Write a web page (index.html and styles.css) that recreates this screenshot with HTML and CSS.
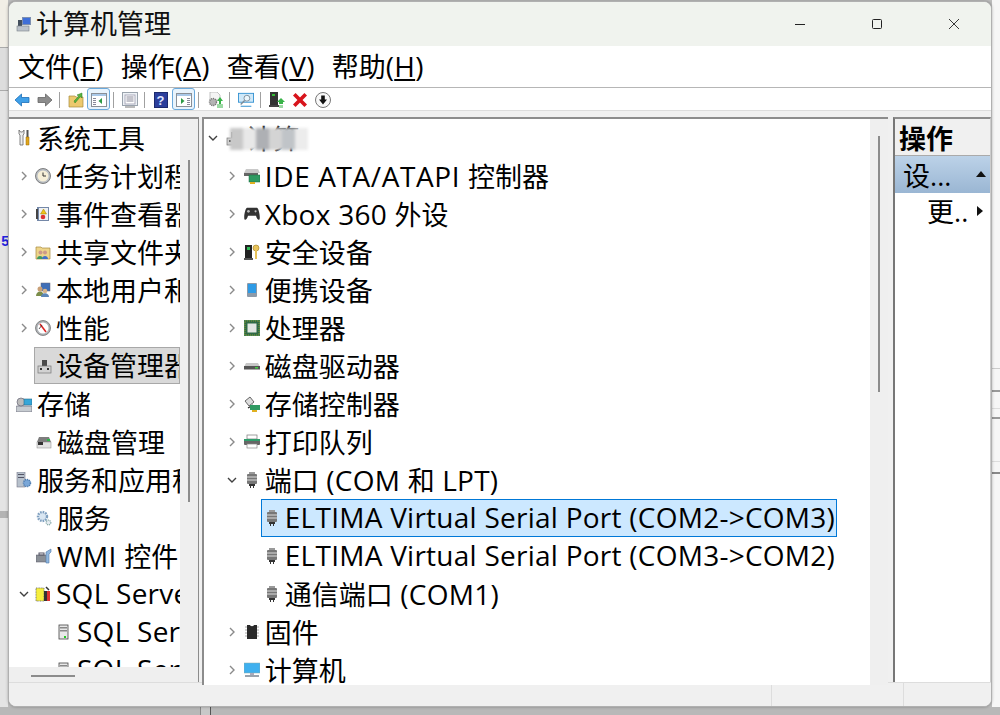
FILE: index.html
```html
<!DOCTYPE html>
<html lang="zh-CN">
<head>
<meta charset="utf-8">
<title>计算机管理</title>
<link rel="stylesheet" href="styles.css">
</head>
<body>
<svg class="sprites" width="0" height="0" aria-hidden="true">
  <defs>
    <symbol id="i-chev-r" viewBox="0 0 8 12"><path d="M2 2l4 4-4 4" fill="none" stroke="#8a8a8a" stroke-width="1.4"/></symbol>
    <symbol id="i-chev-d" viewBox="0 0 12 8"><path d="M2 2l4 4 4-4" fill="none" stroke="#404040" stroke-width="1.4"/></symbol>
    <symbol id="i-comp" viewBox="0 0 16 16"><rect x="6" y="1" width="9" height="8" fill="#7d8fb0"/><rect x="7" y="2" width="7" height="6" fill="#3f6fd8"/><rect x="2" y="4" width="4" height="6" fill="#44505e"/><rect x="1" y="10" width="12" height="5" fill="#bcc3cb" stroke="#7a8088" stroke-width=".6"/></symbol>
    <symbol id="i-device" viewBox="0 0 16 16"><rect x="6" y="2" width="5" height="7" fill="#4a4a4a"/><rect x="2" y="8" width="13" height="7" fill="#d2d2d2" stroke="#777" stroke-width=".7"/><rect x="4" y="10" width="2" height="2" fill="#333"/><rect x="11" y="10" width="2" height="2" fill="#333"/></symbol>
    <symbol id="i-tools" viewBox="0 0 16 16"><path d="M3 0v4l1 1v10h3V5l1-1V0L6.500 2h-2z" fill="#eee" stroke="#666" stroke-width=".8"/><path d="M10.500 0h2v7h-2z" fill="#555"/><path d="M10 7h3v8h-3z" fill="#e0a51c" stroke="#9a6b00" stroke-width=".5"/></symbol>
    <symbol id="i-clock" viewBox="0 0 16 16"><circle cx="8" cy="8" r="7.500" fill="#b9bec4" stroke="#666" stroke-width=".8"/><circle cx="8" cy="8" r="5.500" fill="#f6efd8"/><path d="M8 4.500V8h3" fill="none" stroke="#333" stroke-width="1"/></symbol>
    <symbol id="i-event" viewBox="0 0 16 16"><rect x="2" y="1" width="12" height="14" fill="#7488a8"/><rect x="4" y="2" width="9" height="12" fill="#eef1f5"/><path d="M8.500 3l3 5h-6z" fill="#f0c419" stroke="#9a7a00" stroke-width=".5"/><circle cx="8" cy="11" r="2.300" fill="#d33"/><rect x="1" y="3" width="2" height="10" fill="#444"/></symbol>
    <symbol id="i-share" viewBox="0 0 16 16"><path d="M1 3h5l1 1h8v11H1z" fill="#eed58a" stroke="#a88b3c" stroke-width=".7"/><circle cx="5.500" cy="8.500" r="2" fill="#c98" /><circle cx="10" cy="8.500" r="2" fill="#c98"/><path d="M2 15c0-4 6-4 6 0z" fill="#3f9a5f"/><path d="M7 15c0-4 6-4 6 0z" fill="#3f6fc8"/></symbol>
    <symbol id="i-users" viewBox="0 0 16 16"><rect x="6" y="1" width="9" height="8" fill="#3f6fb8" stroke="#667" stroke-width=".5"/><circle cx="5" cy="7" r="2.500" fill="#c9a077"/><path d="M1 14c0-6 8-6 8 0z" fill="#7b8d4a"/><circle cx="10" cy="9" r="2.300" fill="#d8b48a"/><path d="M6 15c0-5 8-5 8 0z" fill="#5c86b8"/></symbol>
    <symbol id="i-perf" viewBox="0 0 16 16"><circle cx="8" cy="8" r="7.500" fill="#aeb2b6" stroke="#666" stroke-width=".7"/><circle cx="8" cy="8" r="5.500" fill="#fff"/><path d="M5 4l6 8" stroke="#d22" stroke-width="1.500"/><path d="M4 9l3-4" stroke="#333" stroke-width=".8"/></symbol>
    <symbol id="i-storage" viewBox="0 0 16 16"><rect x="0" y="10" width="16" height="6" rx="1" fill="#c6cbd0" stroke="#667" stroke-width=".7"/><circle cx="5" cy="6" r="4" fill="#bbb" stroke="#667" stroke-width=".7"/><rect x="8" y="3" width="8" height="6" fill="#35a6d8" stroke="#2a6d8c" stroke-width=".6"/></symbol>
    <symbol id="i-disk" viewBox="0 0 16 16"><path d="M3 3h10l2 5H1z" fill="#7d7d7d"/><rect x="1" y="8" width="14" height="6" fill="#e2e2e2" stroke="#888" stroke-width=".5"/><rect x="2" y="8" width="5" height="3" fill="#333"/><rect x="11" y="5" width="3" height="2" fill="#2db84a"/></symbol>
    <symbol id="i-svc" viewBox="0 0 16 16"><rect x="1" y="0" width="8" height="15" fill="#b7c1cc" stroke="#778" stroke-width=".6"/><rect x="2" y="2" width="6" height="1" fill="#556"/><rect x="2" y="5" width="6" height="1" fill="#556"/><circle cx="11" cy="11" r="3.500" fill="#7aa7d8" stroke="#4d7cb0" stroke-width="1.500" stroke-dasharray="1.200 .8"/></symbol>
    <symbol id="i-gear" viewBox="0 0 16 16"><circle cx="6.500" cy="6.500" r="4.500" fill="#d9e6f2" stroke="#7f9fbf" stroke-width="2.400" stroke-dasharray="1.600 1"/><circle cx="12.500" cy="12.500" r="2.300" fill="#e6ecf2" stroke="#8aa" stroke-width="1.300" stroke-dasharray="1.100 .7"/></symbol>
    <symbol id="i-wmi" viewBox="0 0 16 16"><rect x="0" y="7" width="11" height="7" fill="#8a8f96" stroke="#556" stroke-width=".5"/><rect x="3" y="5" width="5" height="2" fill="none" stroke="#556"/><path d="M10 4l5-3v3l-2 2v9h-3z" fill="#8fb7e0" stroke="#5078a8" stroke-width=".6"/></symbol>
    <symbol id="i-sql" viewBox="0 0 16 16"><rect x="1" y="2" width="8" height="13" fill="#f6ef3e" stroke="#666" stroke-width=".8" stroke-dasharray="1 .6"/><rect x="9" y="5" width="3" height="10" fill="#333"/><rect x="12" y="5" width="3" height="10" fill="#d33"/><path d="M11 1l3 3" stroke="#333" stroke-width="1.500"/></symbol>
    <symbol id="i-server" viewBox="0 0 16 16"><rect x="3" y="1" width="9" height="14" fill="#e8e8e8" stroke="#444" stroke-width=".8"/><rect x="4" y="3" width="7" height="1.500" fill="#888"/><rect x="4" y="6" width="7" height="1.500" fill="#888"/><rect x="8" y="12" width="2" height="2" fill="#2c2"/></symbol>
    <symbol id="i-ide" viewBox="0 0 16 16"><path d="M2 1h12l2 4H0z" fill="#c9c9c9"/><rect x="0" y="5" width="14" height="3" fill="#666"/><rect x="5" y="7" width="11" height="7" fill="#2f9a62" stroke="#1b6b3e" stroke-width=".5"/><rect x="6" y="14" width="5" height="2" fill="#e0b020"/></symbol>
    <symbol id="i-pad" viewBox="0 0 18 14"><path d="M3.500 0h11c2 0 4 10 3 13-1 1.500-3 0-4-4H4.500c-1 4-3 5.500-4 4-1-3 1-13 3-13z" fill="#333"/><circle cx="13" cy="4" r="1.200" fill="#bbb"/><circle cx="5" cy="4" r="1.500" fill="#bbb"/></symbol>
    <symbol id="i-sec" viewBox="0 0 16 16"><rect x="1" y="1" width="7" height="13" fill="#222"/><rect x="3" y="3" width="3" height="3" fill="#2dbb55"/><rect x="0" y="14" width="9" height="2" fill="#555"/><circle cx="12" cy="4" r="3" fill="#e8c35a" stroke="#a07c1c" stroke-width=".6"/><rect x="11" y="6" width="2" height="9" fill="#e8c35a"/></symbol>
    <symbol id="i-phone" viewBox="0 0 16 16"><rect x="3" y="1" width="10" height="14" rx="1" fill="#8d9aa8"/><rect x="4" y="2" width="8" height="9" fill="#2e9be6"/></symbol>
    <symbol id="i-cpu" viewBox="0 0 16 16"><rect x="0" y="0" width="16" height="16" fill="#3f7f4f"/><rect x="1" y="1" width="14" height="14" fill="#2f6b46" stroke="#e0b020" stroke-width=".5" stroke-dasharray="1 1"/><rect x="3.500" y="3.500" width="9" height="9" fill="#e2e6e2"/></symbol>
    <symbol id="i-hdd" viewBox="0 0 16 16"><path d="M2 5h12l2 4H0z" fill="#c8c8c8"/><rect x="0" y="8" width="16" height="3.500" fill="#555"/><rect x="11" y="9" width="3" height="1.500" fill="#4c4"/></symbol>
    <symbol id="i-ctrl" viewBox="0 0 16 16"><path d="M1 5l5-4 4 5-5 4z" fill="#ddd" stroke="#444" stroke-width=".8"/><path d="M4 12l5-3" stroke="#222" stroke-width="1.200"/><rect x="6" y="9" width="10" height="5" fill="#2f9a62"/><rect x="8" y="14" width="5" height="2" fill="#e0b020"/></symbol>
    <symbol id="i-print" viewBox="0 0 16 16"><rect x="3" y="1" width="10" height="4" fill="#fff" stroke="#777" stroke-width=".7"/><rect x="0" y="5" width="16" height="6" rx="1" fill="#666"/><rect x="0" y="5" width="16" height="2" fill="#2e9d6a"/><rect x="3" y="10" width="10" height="4" fill="#fff" stroke="#888" stroke-width=".7"/></symbol>
    <symbol id="i-port" viewBox="0 0 12 16"><rect x="3" y="0" width="6" height="2" fill="#9a9a9a"/><rect x="1" y="2" width="10" height="10" rx="1" fill="#777"/><path d="M1 5h10M1 8h10" stroke="#ddd" stroke-width="1"/><rect x="3" y="12" width="6" height="2" fill="#333"/><rect x="4" y="14" width="1" height="2" fill="#333"/><rect x="7" y="14" width="1" height="2" fill="#333"/></symbol>
    <symbol id="i-chip" viewBox="0 0 16 16"><path d="M3 1h3c0 1.500 4 1.500 4 0h3v14H3z" fill="#2a2a2a"/><path d="M1 3h2M1 6h2M1 9h2M1 12h2M13 3h2M13 6h2M13 9h2M13 12h2" stroke="#aaa"/></symbol>
    <symbol id="i-mon" viewBox="0 0 16 16"><rect x="0" y="1" width="16" height="10" fill="#3fb0ef" stroke="#8aa" stroke-width=".5"/><rect x="6" y="11" width="4" height="2" fill="#aab"/><rect x="1" y="13" width="14" height="2" fill="#9aa3ad"/></symbol>
    <symbol id="t-back" viewBox="0 0 16 14"><path d="M7.500 1L1 7l6.500 6V9.500H15v-5H7.500z" fill="#3f9fe8" stroke="#1c6fb8" stroke-width=".8"/></symbol>
    <symbol id="t-fwd" viewBox="0 0 16 14"><path d="M8.500 1L15 7l-6.500 6V9.500H1v-5h7.500z" fill="#8c8c8c" stroke="#666" stroke-width=".8"/></symbol>
    <symbol id="t-up" viewBox="0 0 16 16"><path d="M1 4h6l1 1h7v10H1z" fill="#ecc96e" stroke="#a88b3c" stroke-width=".7"/><path d="M6 9l5-5-2-1 5-2v5l-1.500-1.500L7 11z" fill="#57b540" stroke="#2e7d1e" stroke-width=".5"/></symbol>
    <symbol id="t-tree" viewBox="0 0 16 14"><rect x=".5" y=".5" width="15" height="13" fill="#fff" stroke="#8a8f96"/><rect x="1" y="1" width="14" height="2" fill="#a9c8e8"/><path d="M2 5h3v1H2zM2 7h3v1H2zM2 9h3v1H2zM2 11h3v1H2z" fill="#889"/><path d="M11 5v6L7.500 8z" fill="#2c9a45"/></symbol>
    <symbol id="t-pane" viewBox="0 0 16 14"><rect x=".5" y=".5" width="15" height="13" fill="#fff" stroke="#8a8f96"/><rect x="1" y="1" width="14" height="2" fill="#a9c8e8"/><path d="M11 5h3v1h-3zM11 7h3v1h-3zM11 9h3v1h-3zM11 11h3v1h-3z" fill="#889"/><path d="M5 5v6L8.500 8z" fill="#2c9a45"/></symbol>
    <symbol id="t-prop" viewBox="0 0 16 16"><rect x=".5" y=".5" width="15" height="13" fill="#eef2f6" stroke="#9aa3ad"/><rect x="3" y="3" width="10" height="9" fill="#fff" stroke="#aab"/><path d="M4.500 5h7M4.500 7h7M4.500 9h7" stroke="#889"/><rect x="3" y="14" width="10" height="2" fill="#bbb"/></symbol>
    <symbol id="t-export" viewBox="0 0 16 16"><path d="M3 0h7l3 3v5H3z" fill="#f4f4f4" stroke="#aaa" stroke-width=".7"/><circle cx="6" cy="10" r="3.500" fill="#b4b4b4" stroke="#777" stroke-width="1.400" stroke-dasharray="1.200 .8"/><path d="M13 5l3 4h-2v3h-2V9h-2z" fill="#38b348"/><path d="M10 13h6M10 15h6" stroke="#38b348"/></symbol>
    <symbol id="t-scan" viewBox="0 0 18 16"><rect x=".5" y=".5" width="17" height="10" fill="#cfe8f8" stroke="#2f8fd0"/><circle cx="10" cy="6" r="3.300" fill="#eaf5fb" stroke="#7a8a96"/><path d="M7.500 8.500L3 13" stroke="#7a8a96" stroke-width="1.500"/><path d="M3 15h12" stroke="#2f8fd0" stroke-width="1.300"/></symbol>
    <symbol id="t-update" viewBox="0 0 16 16"><rect x="1" y="0" width="8" height="13" fill="#333"/><rect x="3" y="2" width="3" height="2" fill="#3b3"/><rect x="0" y="13" width="10" height="2" fill="#444"/><path d="M12 6l4 4h-2v2h-4v-2H8z" fill="#38b348"/><path d="M10 14h4M10 16h4" stroke="#38b348"/></symbol>
    <symbol id="t-x" viewBox="0 0 14 14"><path d="M2 2l10 10M12 2L2 12" stroke="#d8141c" stroke-width="3.200"/></symbol>
    <symbol id="t-down" viewBox="0 0 16 16"><circle cx="8" cy="8" r="7.500" fill="#f8f8f8" stroke="#777"/><path d="M6.200 3.500h3.600v4h2.200L8 12.500 4 7.500h2.200z" fill="#111"/></symbol>
  </defs>
</svg>

<div class="desk-left">
  <div class="dl-a"></div><div class="dl-b"></div><div class="dl-num">5</div><div class="dl-c"></div>
</div>
<div class="desk-right">
  <div class="dr-a"></div><div class="dr-b"></div><div class="dr-c"></div>
</div>
<div class="desk-bottom"><span class="db-a"></span></div>

<main class="window">
  <header class="titlebar">
    <svg class="title-icon"><use href="#i-comp"/></svg>
    <span class="title-text">计算机管理</span>
    <div class="caption">
      <svg class="cap-btn" viewBox="0 0 12 12"><path d="M1 6.500h10" stroke="#222" stroke-width="1"/></svg>
      <svg class="cap-btn" viewBox="0 0 12 12"><rect x="1.500" y="1.500" width="9" height="9" rx="1" fill="none" stroke="#222"/></svg>
      <svg class="cap-btn" viewBox="0 0 12 12"><path d="M1 1l10 10M11 1L1 11" stroke="#222" stroke-width=".9"/></svg>
    </div>
  </header>
  <nav class="menubar">
    <span class="m">文件<span class="lat">(<u>F</u>)</span></span><span class="m">操作<span class="lat">(<u>A</u>)</span></span><span class="m">查看<span class="lat">(<u>V</u>)</span></span><span class="m">帮助<span class="lat">(<u>H</u>)</span></span>
  </nav>
  <div class="toolbar">
    <span class="tb"><svg class="ti"><use href="#t-back"/></svg></span>
    <span class="tb"><svg class="ti"><use href="#t-fwd"/></svg></span>
    <i class="sep"></i>
    <span class="tb"><svg class="ti"><use href="#t-up"/></svg></span>
    <span class="tb on"><svg class="ti"><use href="#t-tree"/></svg></span>
    <i class="sep"></i>
    <span class="tb"><svg class="ti"><use href="#t-prop"/></svg></span>
    <i class="sep"></i>
    <span class="tb"><span class="helpbtn">?</span></span>
    <span class="tb on"><svg class="ti"><use href="#t-pane"/></svg></span>
    <i class="sep"></i>
    <span class="tb"><svg class="ti"><use href="#t-export"/></svg></span>
    <i class="sep"></i>
    <span class="tb"><svg class="ti"><use href="#t-scan"/></svg></span>
    <i class="sep"></i>
    <span class="tb"><svg class="ti"><use href="#t-update"/></svg></span>
    <span class="tb"><svg class="ti"><use href="#t-x"/></svg></span>
    <span class="tb"><svg class="ti"><use href="#t-down"/></svg></span>
  </div>
  <div class="content">
    <section class="pane pane-left">
      <div class="vscroll"><div class="tree">
        <div class="row lv0"><svg class="ic"><use href="#i-tools"/></svg><span class="t">系统工具</span></div>
        <div class="row lv1"><svg class="ch"><use href="#i-chev-r"/></svg><svg class="ic"><use href="#i-clock"/></svg><span class="t">任务计划程序</span></div>
        <div class="row lv1"><svg class="ch"><use href="#i-chev-r"/></svg><svg class="ic"><use href="#i-event"/></svg><span class="t">事件查看器</span></div>
        <div class="row lv1"><svg class="ch"><use href="#i-chev-r"/></svg><svg class="ic"><use href="#i-share"/></svg><span class="t">共享文件夹</span></div>
        <div class="row lv1"><svg class="ch"><use href="#i-chev-r"/></svg><svg class="ic"><use href="#i-users"/></svg><span class="t">本地用户和组</span></div>
        <div class="row lv1"><svg class="ch"><use href="#i-chev-r"/></svg><svg class="ic"><use href="#i-perf"/></svg><span class="t">性能</span></div>
        <div class="row cur"><span class="curbox"><svg class="ic"><use href="#i-device"/></svg><span class="t">设备管理器</span></span></div>
        <div class="row lv0"><svg class="ic"><use href="#i-storage"/></svg><span class="t">存储</span></div>
        <div class="row noch"><svg class="ic"><use href="#i-disk"/></svg><span class="t">磁盘管理</span></div>
        <div class="row lv0"><svg class="ic"><use href="#i-svc"/></svg><span class="t">服务和应用程序</span></div>
        <div class="row noch"><svg class="ic"><use href="#i-gear"/></svg><span class="t">服务</span></div>
        <div class="row noch"><svg class="ic"><use href="#i-wmi"/></svg><span class="t"><span class="lat">WMI </span>控件</span></div>
        <div class="row lv1"><svg class="ch chd"><use href="#i-chev-d"/></svg><svg class="ic"><use href="#i-sql"/></svg><span class="t"><span class="lat">SQL Server</span></span></div>
        <div class="row lv2"><svg class="ic"><use href="#i-server"/></svg><span class="t"><span class="lat">SQL Server</span></span></div>
        <div class="row lv2"><svg class="ic"><use href="#i-server"/></svg><span class="t"><span class="lat">SQL Server</span></span></div>
      </div><div class="sb-v"><b class="thumb-left"></b></div></div>
      <div class="sb-h"><b></b></div>
    </section>
    <section class="pane pane-mid">
      <div class="tree">
        <div class="row root"><svg class="ch chd"><use href="#i-chev-d"/></svg><svg class="ic"><use href="#i-device"/></svg><span class="t host">计算</span></div>
        <div class="row m1"><svg class="ch"><use href="#i-chev-r"/></svg><svg class="ic"><use href="#i-ide"/></svg><span class="t"><span class="lat wide">IDE ATA/ATAPI </span>控制器</span></div>
        <div class="row m1"><svg class="ch"><use href="#i-chev-r"/></svg><svg class="ic"><use href="#i-pad"/></svg><span class="t"><span class="lat">Xbox 360 </span>外设</span></div>
        <div class="row m1"><svg class="ch"><use href="#i-chev-r"/></svg><svg class="ic"><use href="#i-sec"/></svg><span class="t">安全设备</span></div>
        <div class="row m1"><svg class="ch"><use href="#i-chev-r"/></svg><svg class="ic"><use href="#i-phone"/></svg><span class="t">便携设备</span></div>
        <div class="row m1"><svg class="ch"><use href="#i-chev-r"/></svg><svg class="ic"><use href="#i-cpu"/></svg><span class="t">处理器</span></div>
        <div class="row m1"><svg class="ch"><use href="#i-chev-r"/></svg><svg class="ic"><use href="#i-hdd"/></svg><span class="t">磁盘驱动器</span></div>
        <div class="row m1"><svg class="ch"><use href="#i-chev-r"/></svg><svg class="ic"><use href="#i-ctrl"/></svg><span class="t">存储控制器</span></div>
        <div class="row m1"><svg class="ch"><use href="#i-chev-r"/></svg><svg class="ic"><use href="#i-print"/></svg><span class="t">打印队列</span></div>
        <div class="row m1"><svg class="ch chd"><use href="#i-chev-d"/></svg><svg class="ic"><use href="#i-port"/></svg><span class="t">端口<span class="lat"> (COM </span>和<span class="lat"> LPT)</span></span></div>
        <div class="row m2"><span class="sel"><svg class="ic ics"><use href="#i-port"/></svg><span class="t lat">ELTIMA Virtual Serial Port (COM2-&gt;COM3)</span></span></div>
        <div class="row m2"><span class="nosel"><svg class="ic ics"><use href="#i-port"/></svg><span class="t lat">ELTIMA Virtual Serial Port (COM3-&gt;COM2)</span></span></div>
        <div class="row m2"><span class="nosel"><svg class="ic ics"><use href="#i-port"/></svg><span class="t">通信端口<span class="lat"> (COM1)</span></span></span></div>
        <div class="row m1"><svg class="ch"><use href="#i-chev-r"/></svg><svg class="ic"><use href="#i-chip"/></svg><span class="t">固件</span></div>
        <div class="row m1"><svg class="ch"><use href="#i-chev-r"/></svg><svg class="ic"><use href="#i-mon"/></svg><span class="t">计算机</span></div>
      </div>
      <div class="blur"><b></b><b></b><b></b><b></b><b></b><b></b></div>
      <div class="sb-v mid"><b class="thumb-mid"></b></div>
    </section>
    <aside class="pane pane-right">
      <div class="act-head">操作</div>
      <div class="act-group"><span>设...</span><svg class="tri" viewBox="0 0 10 6"><path d="M5 0l5 6H0z" fill="#111"/></svg></div>
      <div class="act-item"><span>更..</span><svg class="tri2" viewBox="0 0 6 10"><path d="M0 0l6 5-6 5z" fill="#111"/></svg></div>
    </aside>
  </div>
  <footer class="status"><i></i><i></i></footer>
</main>
</body>
</html>
```
FILE: styles.css
```css
* { box-sizing: border-box; }
html, body { margin: 0; height: 715px; overflow: hidden; }
body {
  position: relative;
  background: #bdbdbd;
  font-family: "Open Sans", "Noto Sans CJK SC", sans-serif;
  color: #000;
}
.sprites { position: absolute; }
.lat { font-size: 28px; letter-spacing: .25px; }
.lat.wide { letter-spacing: .6px; }

.desk-left { position: absolute; left: 0; top: 0; width: 8px; height: 715px; background: #f1eee6; overflow: hidden; }
.dl-a { position: absolute; top: 47px; left: 0; width: 8px; height: 44px; background: #ddd; border-top: 1px solid #aaa; border-bottom: 1px solid #aaa; }
.dl-b { position: absolute; top: 91px; left: 0; width: 8px; height: 625px; background: #e4e4e4; }
.dl-num { position: absolute; top: 234px; left: 1px; font: 700 14px "Liberation Mono", monospace; color: #22d; }
.dl-c { position: absolute; top: 511px; left: 0; width: 8px; height: 7px; background: #b4b4b4; }
.desk-right { position: absolute; right: 0; top: 0; width: 8px; height: 715px; background: #f6f6f6; }
.dr-a { position: absolute; top: 368px; left: 0; width: 8px; height: 24px; border-top: 1px solid #ccc; border-bottom: 2px solid #999; }
.dr-b { position: absolute; top: 408px; left: 0; width: 8px; height: 11px; border-top: 1px solid #ddd; border-bottom: 2px solid #999; }
.dr-c { position: absolute; top: 461px; left: 0; width: 8px; height: 13px; border-top: 1px solid #ddd; border-bottom: 2px solid #888; }
.desk-bottom { position: absolute; left: 0; bottom: 0; width: 1000px; height: 8px; background: #b8b8b8; }
.db-a { position: absolute; left: 200px; top: 0; width: 11px; height: 8px; background: #c8c8c8; border-left: 1px solid #888; border-right: 1px solid #555; }

.window {
  position: absolute;
  left: 8px; top: 1px;
  width: 984px; height: 706px;
  display: flex; flex-direction: column;
  background: #f0f0f0;
  border: 1px solid #b0b0b0;
  border-radius: 8px;
  box-shadow: 0 0 3px rgba(0, 0, 0, .3);
  overflow: hidden;
}
.titlebar { height: 44px; flex: none; display: flex; align-items: center; background: #f0f3ee; padding-left: 7px; }
.title-icon { width: 16px; height: 16px; margin-right: 4px; }
.title-text { font-size: 27px; line-height: 44px; color: #111; }
.caption { margin-left: auto; display: flex; gap: 65px; padding-right: 31px; }
.cap-btn { width: 12px; height: 12px; }
.menubar { height: 42px; flex: none; display: flex; align-items: center; background: #fff; padding-left: 9px; gap: 17px; font-size: 27px; border-bottom: 1px solid #b6b6b6; }
.m { margin-bottom: 2px; }
.toolbar { height: 23px; flex: none; display: flex; align-items: center; background: #fff; padding-left: 1px; border-bottom: 1px solid #dcdcdc; }
.tb { width: 23px; height: 22px; flex: none; display: flex; align-items: center; justify-content: center; padding-top: 2px; }
.tb.on { background: #e8f3fc; border: 1px solid #6aa9dc; border-radius: 3px; padding-top: 1px; }
.ti { width: 16px; height: 16px; }
.helpbtn { width: 14px; height: 16px; display: block; background: #2c3f9c; border: 1px solid #1c2a6e; color: #dfe6ff; font: 700 13px/15px "Liberation Sans", sans-serif; text-align: center; }
.sep { width: 1px; height: 16px; background: #a0a0a0; margin: 1px 4px 0 3px; flex: none; }
.content { flex: 1; display: flex; padding-top: 6px; background: #f0f0f0; min-height: 0; }
.pane { background: #fff; border-top: 2px solid #8c8c8c; overflow: hidden; height: 568px; }
.pane-left { width: 190px; display: flex; flex-direction: column; border-right: 1px solid #8c8c8c; border-bottom: 1px solid #8c8c8c; }
.pane-mid { width: 687px; margin-left: 3px; display: flex; border-left: 2px solid #8c8c8c; position: relative; }
.pane-right { width: 98px; margin-left: 5px; border-left: 2px solid #777; border-right: 1px solid #ccc; }
.vscroll { display: flex; flex: 1; min-height: 0; }
.tree { flex: 1; min-width: 0; overflow: hidden; font-size: 27px; }
.row { height: 38px; display: flex; align-items: center; white-space: nowrap; overflow: hidden; flex: none; }
.t { margin-bottom: 2px; }
.lv0 { padding-left: 7px; }
.lv1 { padding-left: 11px; }
.noch { padding-left: 27px; }
.lv2 { padding-left: 47px; }
.root { padding-left: 5px; }
.m1 { padding-left: 24px; }
.m2 { padding-left: 57px; }
.ch { width: 8px; height: 12px; margin-right: 8px; flex: none; }
.lv1 .ch { margin-right: 7px; }
.chd, .lv1 .chd { width: 12px; height: 8px; margin-right: 6px; margin-left: -2px; }
.lv1 .chd { margin-right: 5px; }
.ic { width: 16px; height: 16px; margin-right: 5px; flex: none; }
.ics { width: 12px; height: 16px; margin-right: 7px; margin-left: 3px; }
.cur { padding-left: 25px; }
.curbox { display: flex; align-items: center; flex: 1; height: 37px; margin-bottom: 1px; background: #d9d9d9; border: 1px solid #a8a8a8; padding-left: 1px; overflow: hidden; }
.curbox .ic { margin-right: 4px; }
.sel, .nosel { display: flex; align-items: center; height: 38px; padding: 0 1px; }
.sel { background: #cce8ff; border: 1px solid #0078d7; }
.nosel { border: 1px solid transparent; }
.host { color: #222; }
.blur { position: absolute; left: 26px; top: 9px; display: flex; filter: blur(1.500px); }
.blur b { width: 13px; height: 22px; display: block; background: #c8c8c8; }
.blur b:nth-child(2) { background: #e8e8e8; }
.blur b:nth-child(3) { background: #aeb0b4; }
.blur b:nth-child(4) { background: #d4d4d4; }
.blur b:nth-child(5) { background: #c0c4c8; }
.blur b:nth-child(6) { background: #ececec; }
.sb-v { width: 18px; flex: none; background: #efefef; display: flex; justify-content: center; position: relative; }
.sb-v b { width: 2px; background: #8c8c8c; display: block; position: absolute; }
.thumb-left { top: 41px; height: 342px; }
.thumb-mid { top: 17px; height: 256px; }
.sb-h { height: 17px; flex: none; background: #efefef; display: flex; align-items: center; padding-left: 22px; }
.sb-h b { width: 44px; height: 2px; background: #8c8c8c; display: block; }
.act-head { height: 37px; font-size: 27px; font-weight: 700; background: #f0f0f0; border-bottom: 1px solid #aaa; padding-left: 4px; line-height: 40px; overflow: hidden; }
.act-group { height: 37px; display: flex; align-items: center; font-size: 27px; background: linear-gradient(#bcd2e8, #9ab6d3); padding-left: 8px; position: relative; }
.act-item { height: 36px; display: flex; align-items: center; font-size: 27px; padding: 0 0 2px 32px; position: relative; }
.tri { position: absolute; right: 4px; top: 15px; width: 10px; height: 6px; }
.tri2 { position: absolute; right: 7px; top: 13px; width: 6px; height: 10px; }
.status { height: 24px; flex: none; display: flex; background: #f0f0f0; border-top: 1px solid #ddd; }
.status i { display: block; border-right: 1px solid #ddd; }
.status i:nth-child(1) { width: 763px; }
.status i:nth-child(2) { width: 132px; }
```
